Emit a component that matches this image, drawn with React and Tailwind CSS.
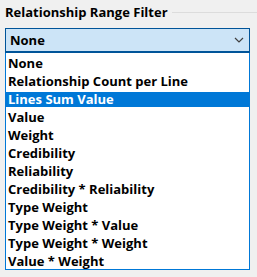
import React from 'react';

const items = [
    'None',
    'Relationship Count per Line',
    'Lines Sum Value',
    'Value',
    'Weight',
    'Credibility',
    'Reliability',
    'Credibility * Reliability',
    'Type Weight',
    'Type Weight * Value',
    'Type Weight * Weight',
    'Value * Weight',
];

const App = () => {
    const selected = 2;

    return (
        <div className="w-[257px] h-[277px] bg-[#f0f0f0] overflow-hidden font-['Open_Sans',sans-serif] font-bold text-[13px] text-black">
            {/* Group title */}
            <div className="flex items-center h-[25px] pl-[5px]">
                <span className="leading-none">Relationship Range Filter</span>
                <div className="flex-grow h-px bg-[#dcdcdc] ml-[4px]" />
            </div>

            <div className="ml-[5px] w-[245px] mt-[3px]">
                {/* Combo box */}
                <div className="h-[25px] bg-[#cce4f7] border border-[#005499] border-b-2 flex items-center justify-between pl-[4px] pr-[5px]">
                    <span className="leading-none">None</span>
                    <svg width="10" height="6" viewBox="0 0 10 6" fill="none">
                        <path d="M1 1 L5 5 L9 1" stroke="#404040" strokeWidth="1.2" />
                    </svg>
                </div>

                {/* Dropdown list */}
                <div className="bg-white border border-t-0 border-[#0078d7] h-[217px]">
                    {items.map((item, idx) => (
                        <div key={idx} className="h-[18px] pt-[3px]">
                            <div className={`h-[15px] flex items-center pl-[2px] ${idx === selected ? 'bg-[#0078d7] text-white' : ''}`}>
                                <span className="leading-none">{item}</span>
                            </div>
                        </div>
                    ))}
                </div>
            </div>
        </div>
    );
};

export default App;
